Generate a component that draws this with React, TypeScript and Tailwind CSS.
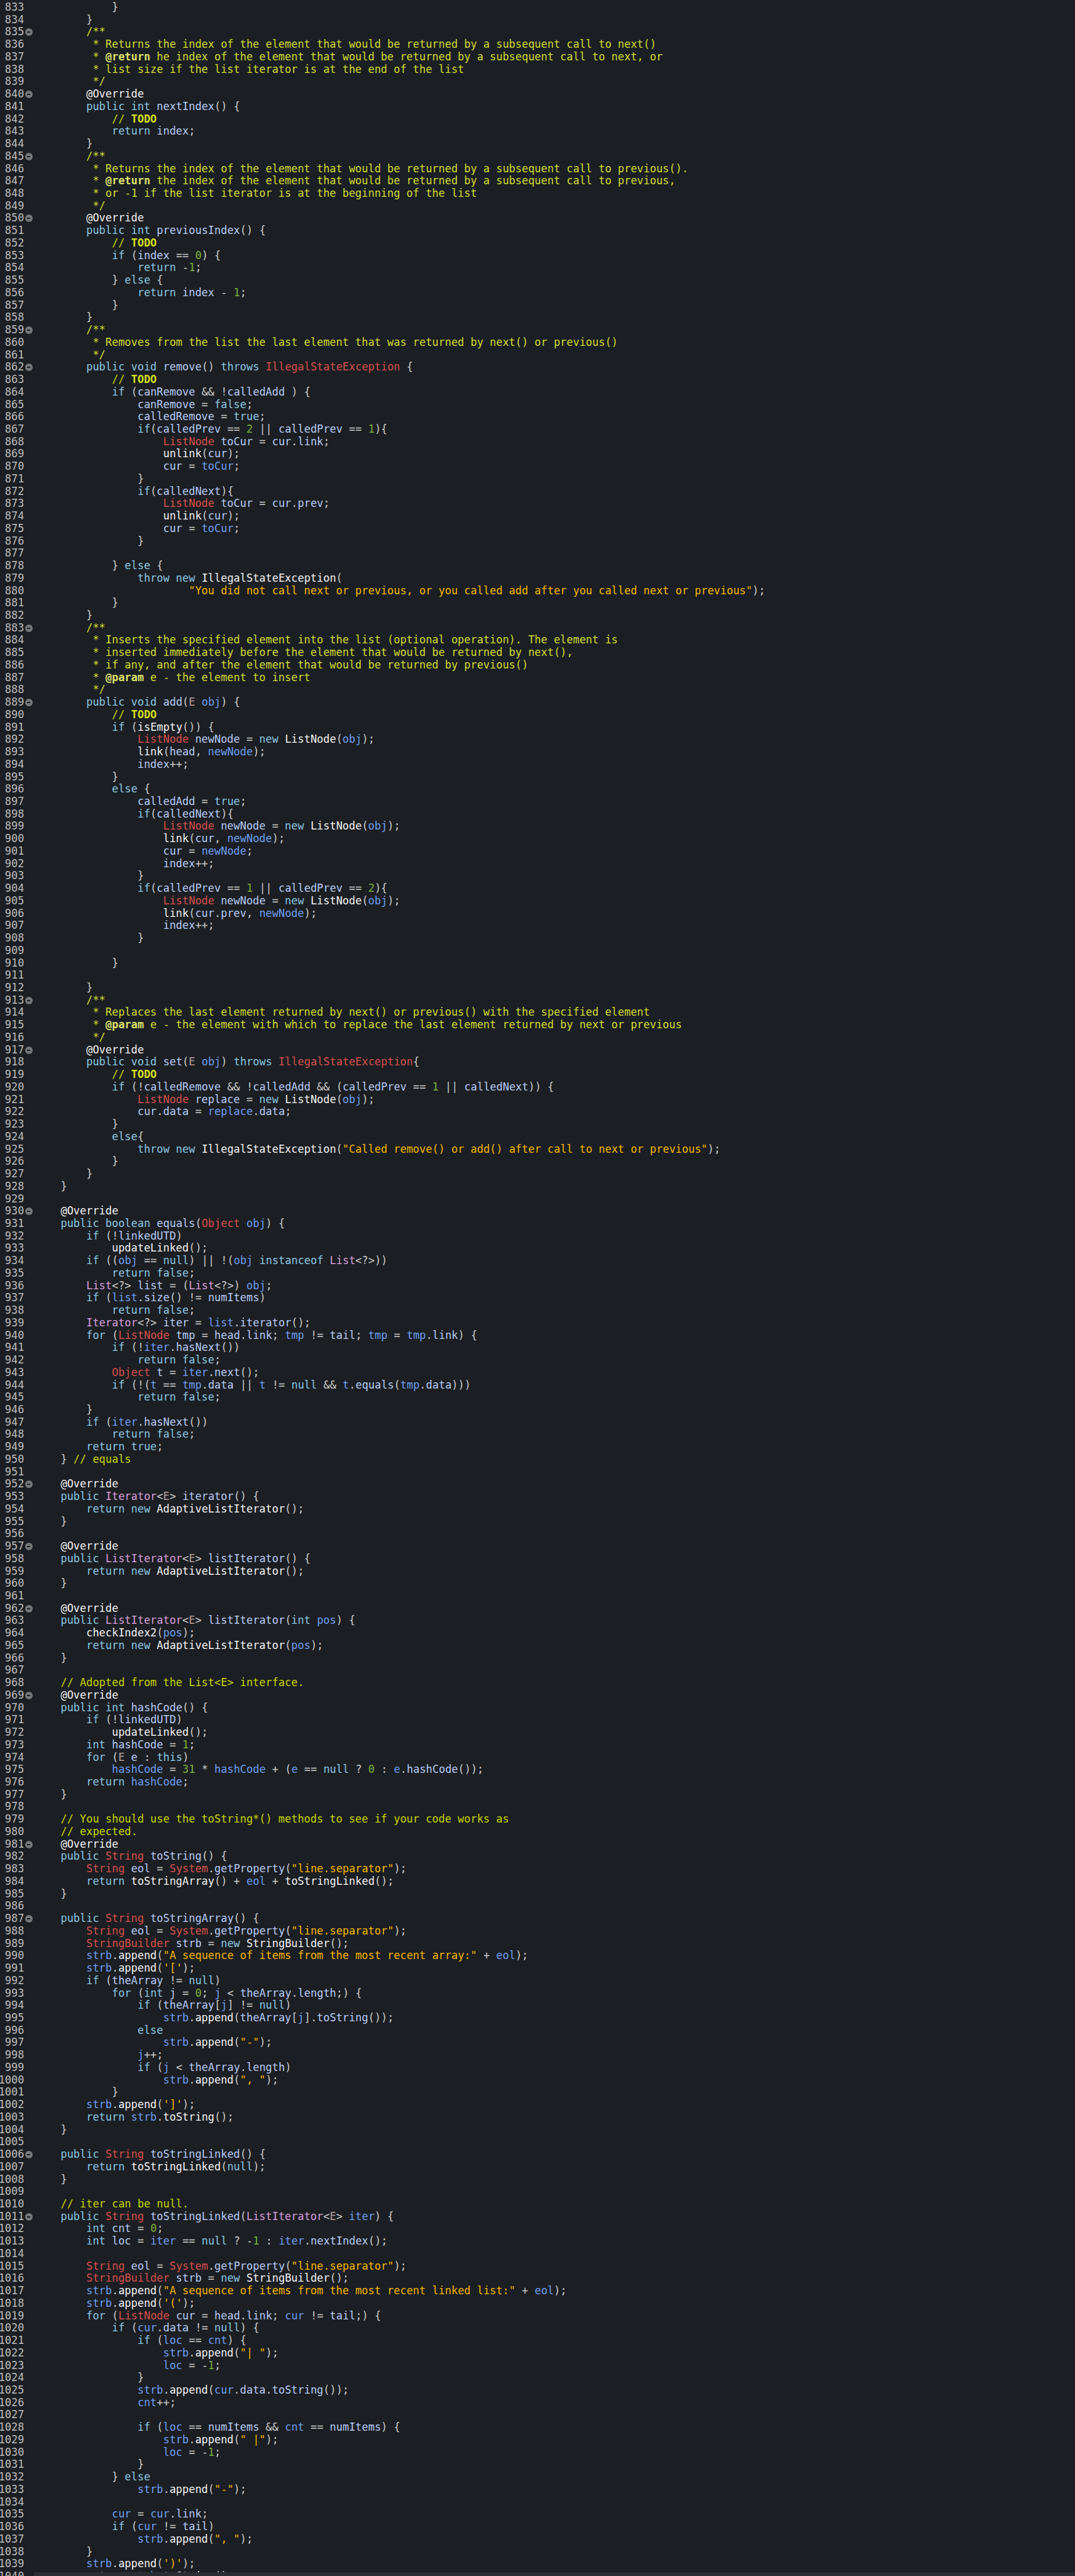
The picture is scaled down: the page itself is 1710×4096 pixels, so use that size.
import React from 'react';

// ~ marks a local variable use, ^ a member shown in the field colour even before "("
const source = `            }
        }
        /**
         * Returns the index of the element that would be returned by a subsequent call to next()
         * @return he index of the element that would be returned by a subsequent call to next, or
         * list size if the list iterator is at the end of the list
         */
        @Override
        public int ^nextIndex() {
            // TODO
            return index;
        }
        /**
         * Returns the index of the element that would be returned by a subsequent call to previous().
         * @return the index of the element that would be returned by a subsequent call to previous,
         * or -1 if the list iterator is at the beginning of the list
         */
        @Override
        public int ^previousIndex() {
            // TODO
            if (index == 0) {
                return -1;
            } else {
                return index - 1;
            }
        }
        /**
         * Removes from the list the last element that was returned by next() or previous()
         */
        public void ^remove() throws IllegalStateException {
            // TODO
            if (canRemove && !calledAdd ) {
                canRemove = false;
                calledRemove = true;
                if(calledPrev == 2 || calledPrev == 1){
                    ListNode toCur = cur.link;
                    unlink(cur);
                    cur = ~toCur;
                }
                if(calledNext){
                    ListNode toCur = cur.prev;
                    unlink(cur);
                    cur = ~toCur;
                }

            } else {
                throw new IllegalStateException(
                        "You did not call next or previous, or you called add after you called next or previous");
            }
        }
        /**
         * Inserts the specified element into the list (optional operation). The element is
         * inserted immediately before the element that would be returned by next(),
         * if any, and after the element that would be returned by previous()
         * @param e - the element to insert
         */
        public void ^add(E ~obj) {
            // TODO
            if (isEmpty()) {
                ListNode newNode = new ListNode(~obj);
                link(head, ~newNode);
                index++;
            }
            else {
                calledAdd = true;
                if(calledNext){
                    ListNode newNode = new ListNode(~obj);
                    link(cur, ~newNode);
                    cur = ~newNode;
                    index++;
                }
                if(calledPrev == 1 || calledPrev == 2){
                    ListNode newNode = new ListNode(~obj);
                    link(cur.prev, ~newNode);
                    index++;
                }

            }

        }
        /**
         * Replaces the last element returned by next() or previous() with the specified element
         * @param e - the element with which to replace the last element returned by next or previous
         */
        @Override
        public void ^set(E ~obj) throws IllegalStateException{
            // TODO
            if (!calledRemove && !calledAdd && (calledPrev == 1 || calledNext)) {
                ListNode replace = new ListNode(~obj);
                cur.data = ~replace.data;
            }
            else{
                throw new IllegalStateException("Called remove() or add() after call to next or previous");
            }
        }
    }

    @Override
    public boolean ^equals(Object ~obj) {
        if (!linkedUTD)
            updateLinked();
        if ((~obj == null) || !(~obj instanceof List<?>))
            return false;
        List<?> list = (List<?>) ~obj;
        if (~list.^size() != numItems)
            return false;
        Iterator<?> iter = ~list.^iterator();
        for (ListNode tmp = head.link; ~tmp != tail; ~tmp = ~tmp.link) {
            if (!~iter.^hasNext())
                return false;
            Object t = ~iter.^next();
            if (!(~t == ~tmp.data || ~t != null && ~t.^equals(~tmp.data)))
                return false;
        }
        if (~iter.^hasNext())
            return false;
        return true;
    } // equals

    @Override
    public Iterator<E> ^iterator() {
        return new AdaptiveListIterator();
    }

    @Override
    public ListIterator<E> ^listIterator() {
        return new AdaptiveListIterator();
    }

    @Override
    public ListIterator<E> ^listIterator(int ~pos) {
        checkIndex2(~pos);
        return new AdaptiveListIterator(~pos);
    }

    // Adopted from the List<E> interface.
    @Override
    public int ^hashCode() {
        if (!linkedUTD)
            updateLinked();
        int hashCode = 1;
        for (E e : this)
            ~hashCode = 31 * ~hashCode + (~e == null ? 0 : ~e.^hashCode());
        return ~hashCode;
    }

    // You should use the toString*() methods to see if your code works as
    // expected.
    @Override
    public String ^toString() {
        String eol = System.^getProperty("line.separator");
        return toStringArray() + ~eol + toStringLinked();
    }

    public String ^toStringArray() {
        String eol = System.^getProperty("line.separator");
        StringBuilder strb = new StringBuilder();
        ~strb.append("A sequence of items from the most recent array:" + ~eol);
        ~strb.append('[');
        if (theArray != null)
            for (int j = 0; ~j < theArray.length;) {
                if (theArray[~j] != null)
                    ~strb.append(theArray[~j].^toString());
                else
                    ~strb.append("-");
                ~j++;
                if (~j < theArray.length)
                    ~strb.append(", ");
            }
        ~strb.append(']');
        return ~strb.toString();
    }

    public String ^toStringLinked() {
        return toStringLinked(null);
    }

    // iter can be null.
    public String ^toStringLinked(ListIterator<E> ~iter) {
        int cnt = 0;
        int loc = ~iter == null ? -1 : ~iter.^nextIndex();

        String eol = System.^getProperty("line.separator");
        StringBuilder strb = new StringBuilder();
        ~strb.append("A sequence of items from the most recent linked list:" + ~eol);
        ~strb.append('(');
        for (ListNode cur = head.link; ~cur != tail;) {
            if (~cur.data != null) {
                if (~loc == ~cnt) {
                    ~strb.append("| ");
                    ~loc = -1;
                }
                ~strb.append(~cur.data.^toString());
                ~cnt++;

                if (~loc == numItems && ~cnt == numItems) {
                    ~strb.append(" |");
                    ~loc = -1;
                }
            } else
                ~strb.append("-");

            ~cur = ~cur.link;
            if (~cur != tail)
                ~strb.append(", ");
        }
        ~strb.append(')');
        return ~strb.toString();`;

const foldLines = new Set([835, 840, 845, 850, 859, 862, 883, 889, 913, 917, 930, 952, 957, 962, 969, 981, 987, 1006, 1011]);

const keywords = new Set(['public', 'void', 'int', 'boolean', 'if', 'else', 'return', 'new', 'throw', 'throws', 'for', 'this', 'null', 'true', 'false', 'instanceof']);
const classes = new Set(['IllegalStateException', 'ListNode', 'Object', 'String', 'StringBuilder', 'System']);
const interfaces = new Set(['List', 'Iterator', 'ListIterator']);

const colors = {
  keyword: 'text-[#8cc8e2]',
  field: 'text-[#b9cdf6]',
  local: 'text-[#6f9fef]',
  call: 'text-[#f4f4f4]',
  cls: 'text-[#d6504e]',
  iface: 'text-[#d79fdc]',
  typeParam: 'text-[#b39f9f]',
  number: 'text-[#7cb23e]',
  string: 'text-[#f4b800]',
  punct: 'text-[#cccccc]',
  doc: 'text-[#d2de32]',
  docTag: 'font-bold text-[#dde36d]',
  comment: 'text-[#c8d800]',
  todo: 'font-bold text-[#d6e31f]',
};

function tokenClass(tok: string, next: string) {
  if (/^\s+$/.test(tok)) return '';
  if (tok[0] === '"' || tok[0] === "'") return colors.string;
  if (tok[0] === '@') return colors.call;
  if (tok[0] === '~') return colors.local;
  if (tok[0] === '^') return colors.field;
  if (/^\d+$/.test(tok)) return colors.number;
  if (!/^[A-Za-z_]/.test(tok)) return colors.punct;
  if (keywords.has(tok)) return colors.keyword;
  if (next[0] === '(') return colors.call;
  if (classes.has(tok)) return colors.cls;
  if (interfaces.has(tok)) return colors.iface;
  if (tok === 'E') return colors.typeParam;
  return colors.field;
}

function CodeText({ text }: { text: string }) {
  const tokens = text.match(/"[^"]*"|'[^']*'|@\w+|[~^]?[A-Za-z_]\w*|\d+|\s+|[^\w\s"'~^@]+/g) ?? [];
  return (
    <>
      {tokens.map((tok, i) => (
        <span key={i} className={tokenClass(tok, tokens[i + 1] ?? '')}>
          {tok.replace(/^[~^]/, '')}
        </span>
      ))}
    </>
  );
}

function CodeLine({ line }: { line: string }) {
  const trimmed = line.trim();
  if (trimmed.startsWith('/**') || trimmed.startsWith('*')) {
    return (
      <span className={colors.doc}>
        {line.split(/(@\w+)/).map((part, i) => (
          <span key={i} className={i % 2 ? colors.docTag : ''}>{part}</span>
        ))}
      </span>
    );
  }
  const at = line.indexOf('//');
  if (at === -1) return <CodeText text={line} />;
  return (
    <>
      <CodeText text={line.slice(0, at)} />
      <span className={colors.comment}>
        {line.slice(at).split(/(TODO)/).map((part, i) => (
          <span key={i} className={i % 2 ? colors.todo : ''}>{part}</span>
        ))}
      </span>
    </>
  );
}

export default function App() {
  const lines = source.split('\n');
  return (
    <div className="relative h-[4096px] overflow-hidden bg-[#1b1e22] pt-[2px] text-[16.93px] leading-[19.74px] [font-family:'DejaVu_Sans_Mono',monospace]">
      {lines.map((line, i) => {
        const num = 833 + i;
        return (
          <div key={num} className="flex h-[19.74px]">
            <div className="flex w-[38.4px] shrink-0 justify-end text-[#bdbdbd]">{num}</div>
            <div className="flex w-[17.3px] shrink-0 items-center pl-[1.5px]">
              {foldLines.has(num) && (
                <div className="flex h-[12px] w-[12px] items-center justify-center rounded-full bg-[#777777]">
                  <div className="h-[2px] w-[5px] bg-[#1b1e22]" />
                </div>
              )}
            </div>
            <div className="whitespace-pre">
              <CodeLine line={line} />
            </div>
          </div>
        );
      })}
      {/* horizontal scrollbar track along the bottom edge */}
      <div className="absolute bottom-0 left-[54px] right-0 h-[6px] bg-[#2a2d31]" />
    </div>
  );
}
